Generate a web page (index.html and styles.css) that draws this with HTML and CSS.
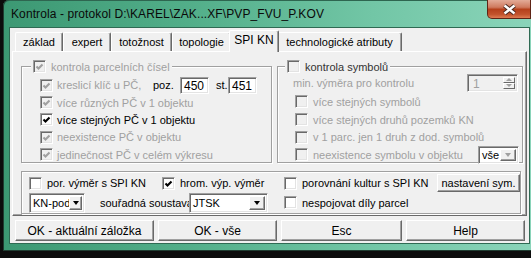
FILE: index.html
```html
<!DOCTYPE html>
<html lang="cs">

<head>
  <meta charset="UTF-8" />
  <meta name="viewport" content="width=device-width, initial-scale=1.0" />
  <link rel="stylesheet" href="styles.css">
  <title>Kontrola - protokol</title>
</head>

<body>
  <div class="window">
    <!-- titulek okna -->
    <div class="titlebar">
      <span class="title">Kontrola - protokol D:\KAREL\ZAK...XF\PVP_FVU_P.KOV</span>
      <div class="close">
        <svg width="15" height="11" viewBox="0 0 15 11">
          <path class="x-out" d="M2.5 1.5 L12.5 9.5 M12.5 1.5 L2.5 9.5" />
          <path class="x-in" d="M2.5 1.5 L12.5 9.5 M12.5 1.5 L2.5 9.5" />
        </svg>
      </div>
    </div>

    <div class="client">
      <!-- záložky -->
      <div class="tabs">
        <div class="tab tab-zaklad">základ</div>
        <div class="tab tab-expert">expert</div>
        <div class="tab tab-totoznost">totožnost</div>
        <div class="tab tab-topologie">topologie</div>
        <div class="tab tab-spi active">SPI KN</div>
        <div class="tab tab-tech">technologické atributy</div>
      </div>

      <div class="panel">
        <div class="groups">
          <!-- parcelní čísla -->
          <fieldset class="group group-pc">
            <legend>
              <span class="check dis"><span class="cb dis"><svg class="tick" viewBox="0 0 11 11"><polyline points="2.5,5.5 4.5,7.5 8.5,3.5" /></svg></span>kontrola parcelních čísel</span>
            </legend>
            <div class="row row-tall">
              <span class="check dis"><span class="cb dis"><svg class="tick" viewBox="0 0 11 11"><polyline points="2.5,5.5 4.5,7.5 8.5,3.5" /></svg></span><span class="key">kreslicí klíč u PČ,</span></span>
              <span class="lbl-poz">poz.</span>
              <span class="edit sunken">450</span>
              <span class="lbl-st">st.</span>
              <span class="edit sunken">451</span>
            </div>
            <div class="row">
              <span class="check dis"><span class="cb dis"><svg class="tick" viewBox="0 0 11 11"><polyline points="2.5,5.5 4.5,7.5 8.5,3.5" /></svg></span>více různých PČ v 1 objektu</span>
            </div>
            <div class="row">
              <span class="check"><span class="cb"><svg class="tick" viewBox="0 0 11 11"><polyline points="2.5,5.5 4.5,7.5 8.5,3.5" /></svg></span>více stejných PČ v 1 objektu</span>
            </div>
            <div class="row row-tall">
              <span class="check dis"><span class="cb dis"><svg class="tick" viewBox="0 0 11 11"><polyline points="2.5,5.5 4.5,7.5 8.5,3.5" /></svg></span>neexistence PČ v objektu</span>
            </div>
            <div class="row">
              <span class="check dis"><span class="cb dis"><svg class="tick" viewBox="0 0 11 11"><polyline points="2.5,5.5 4.5,7.5 8.5,3.5" /></svg></span>jedinečnost PČ v celém výkresu</span>
            </div>
          </fieldset>

          <!-- symboly -->
          <fieldset class="group group-sym">
            <legend>
              <span class="check legend-sym"><span class="cb dis"></span>kontrola symbolů</span>
            </legend>
            <div class="row row-big dis">
              <span class="min-label">min. výměra pro kontrolu</span>
              <span class="spin sunken">
                <span class="spin-val">1</span>
                <span class="spin-btns">
                  <span class="spin-btn up"></span>
                  <span class="spin-btn down"></span>
                </span>
              </span>
            </div>
            <div class="row row-big">
              <span class="check dis"><span class="cb dis"></span>více stejných symbolů</span>
            </div>
            <div class="row">
              <span class="check dis"><span class="cb dis"></span>více stejných druhů pozemků KN</span>
            </div>
            <div class="row row-tall">
              <span class="check dis"><span class="cb dis"></span>v 1 parc. jen 1 druh z dod. symbolů</span>
            </div>
            <div class="row">
              <span class="check dis"><span class="cb dis"></span>neexistence symbolu v objektu</span>
              <span class="combo combo-vse sunken"><span class="combo-val">vše</span><span class="drop dis"></span></span>
            </div>
          </fieldset>
        </div>

        <!-- spodní volby -->
        <div class="lower">
          <div class="lower-row row-1">
            <span class="check opt-por"><span class="cb"></span>por. výměr s SPI KN</span>
            <span class="check opt-hrom"><span class="cb"><svg class="tick" viewBox="0 0 11 11"><polyline points="2.5,5.5 4.5,7.5 8.5,3.5" /></svg></span>hrom. výp. výměr</span>
            <span class="check opt-kult"><span class="cb"></span>porovnání kultur s SPI KN</span>
            <button class="btn btn-sym">nastavení sym.</button>
          </div>
          <div class="lower-row row-2">
            <span class="combo combo-kn sunken"><span class="combo-val">KN-pod</span><span class="drop"></span></span>
            <span class="lbl-sour">souřadná soustava</span>
            <span class="combo combo-jtsk sunken"><span class="combo-val">JTSK</span><span class="drop"></span></span>
            <span class="check opt-nesp"><span class="cb"></span>nespojovat díly parcel</span>
          </div>
        </div>
      </div>

      <!-- tlačítka -->
      <div class="buttons">
        <button class="btn btn-ok1">OK - aktuální záložka</button>
        <button class="btn btn-ok2">OK - vše</button>
        <button class="btn btn-esc">Esc</button>
        <button class="btn btn-help">Help</button>
      </div>
    </div>
  </div>
</body>

</html>
```

FILE: styles.css
```css
:root {
  --face: #f0f0f0;
  --shadow: #a0a0a0;
  --dark: #696969;
  --light: #e3e3e3;
  --disabled: #a0a0a0;
}

* {
  box-sizing: border-box;
}

body {
  margin: 0;
  width: 531px;
  height: 258px;
  overflow: hidden;
  background-color: #0c0c0c;
  font-family: "Liberation Sans", Arial, sans-serif;
  font-size: 11px;
  color: #000;
}

/* okno */
.window {
  margin-left: 3px;
  width: 528px;
  height: 251px;
  padding: 0 2px 8px 7px;
  border-radius: 6px 0 0 0;
  background: linear-gradient(90deg, #3c9873 0%, #52ae89 35%, #72c6a6 70%, #8ad4b9 100%);
  box-shadow: inset 1px 0 0 #1f3d31, inset 0 1px 0 #2e6650, inset 0 -1px 0 #1f3d31;
  display: flex;
  flex-direction: column;
}

.titlebar {
  height: 28px;
  display: flex;
  align-items: flex-start;
  justify-content: space-between;
}

.title {
  padding: 7px 0 0 1px;
  font-size: 12px;
  letter-spacing: 0.1px;
  color: #0a0a0a;
  white-space: nowrap;
}

.close {
  width: 44px;
  height: 19px;
  margin-right: -2px;
  border: 1px solid #5e2416;
  border-top: none;
  border-radius: 0 0 0 5px;
  background: linear-gradient(#e3ab98 0%, #cf7a5f 40%, #b5401c 52%, #c2532c 80%, #de7c52 100%);
  display: flex;
  align-items: center;
  justify-content: center;
}

.x-out {
  stroke: #4a2a22;
  stroke-width: 4.4;
  fill: none;
}

.x-in {
  stroke: #fff;
  stroke-width: 2.4;
  fill: none;
}

.client {
  flex: 1;
  background-color: var(--face);
  box-shadow: 0 0 0 1px #2f6a53;
  padding: 0 2px;
  display: flex;
  flex-direction: column;
}

/* záložky */
.tabs {
  height: 23px;
  padding-left: 3px;
  display: flex;
  align-items: flex-end;
}

.tab {
  height: 19px;
  padding: 1px 0 0;
  line-height: 17px;
  text-align: center;
  border-top: 1px solid #fff;
  border-left: 1px solid #fff;
  border-right: 1px solid var(--dark);
  border-radius: 2px 2px 0 0;
  box-shadow: inset -1px 0 0 var(--shadow);
  white-space: nowrap;
}

.tab-zaklad { width: 48px; }
.tab-expert { width: 48px; }
.tab-totoznost { width: 61px; }
.tab-topologie { width: 59px; }
.tab-spi { width: 46px; }
.tab-tech { width: 125px; }

.tab.active {
  width: 50px;
  height: 22px;
  margin: 0 -2px -1px;
  padding-top: 1px;
  background-color: var(--face);
  position: relative;
  z-index: 1;
  font-size: 12px;
}

.panel {
  height: 165px;
  padding: 8px 2px 1px 8px;
  border: 1px solid;
  border-color: #fff var(--dark) var(--dark) #fff;
  box-shadow: inset -1px -1px 0 var(--shadow);
}

.groups {
  display: flex;
  gap: 5px;
  height: 103px;
}

/* rámečky skupin */
.group {
  margin: 0;
  padding: 3px 0 0;
  min-width: 0;
  border: 1px solid var(--shadow);
  box-shadow: inset 1px 1px 0 #fff, 1px 1px 0 #fff;
}

.group-pc {
  width: 251px;
}

.group-sym {
  width: 246px;
  padding-top: 0;
}

.group legend {
  padding: 0 2px;
  background-color: var(--face);
  height: 13px;
}

.group-pc legend {
  margin-left: 9px;
}

.group-sym legend {
  margin-left: 7px;
}

.group legend .check {
  gap: 5px;
  height: 13px;
}

.legend-sym {
  color: #333;
}

.row {
  height: 17px;
  display: flex;
  align-items: center;
}

.row-tall {
  height: 18px;
}

.row-big {
  height: 19px;
}

.group-pc .row {
  padding-left: 18px;
}

.group-sym .row {
  padding-left: 17px;
}

.group-sym .row.dis {
  padding-left: 15px;
  color: var(--disabled);
}

/* zaškrtávátka */
.check {
  display: inline-flex;
  align-items: center;
  gap: 5px;
  white-space: nowrap;
}

.group-pc .row .check {
  gap: 4px;
}

.check.dis {
  color: var(--disabled);
}

.cb {
  width: 13px;
  height: 13px;
  flex: none;
  border: 1px solid;
  border-color: var(--shadow) #fff #fff var(--shadow);
  box-shadow: inset 1px 1px 0 var(--dark), inset -1px -1px 0 var(--light);
  background-color: #fff;
  color: #000;
  display: inline-flex;
}

.cb.dis {
  background-color: var(--face);
  color: var(--disabled);
}

.tick {
  width: 11px;
  height: 11px;
}

.tick polyline {
  fill: none;
  stroke: currentColor;
  stroke-width: 2.1;
}

.key {
  width: 96px;
}

.lbl-poz {
  width: 27px;
}

.lbl-st {
  width: 19px;
  padding-left: 7px;
}

.sunken {
  border: 1px solid;
  border-color: var(--shadow) #fff #fff var(--shadow);
  box-shadow: inset 1px 1px 0 var(--dark), inset -1px -1px 0 var(--light);
}

.edit {
  width: 29px;
  height: 17px;
  padding: 1px 0 0 3px;
  line-height: 14px;
  background-color: #fff;
  font-size: 12px;
}

.min-label {
  flex: 1;
}

.spin {
  width: 51px;
  height: 18px;
  margin-right: 4px;
  padding: 2px;
  display: flex;
  background-color: var(--face);
}

.spin-val {
  flex: 1;
  padding-left: 3px;
  line-height: 14px;
  font-size: 12px;
}

.spin-btns {
  width: 12px;
  display: flex;
  flex-direction: column;
}

.spin-btn {
  flex: 1;
  border: 1px solid;
  border-color: #fff var(--dark) var(--dark) #fff;
  display: flex;
  align-items: center;
  justify-content: center;
}

.spin-btn::after {
  content: "";
  border-left: 3px solid transparent;
  border-right: 3px solid transparent;
}

.spin-btn.up::after {
  border-bottom: 3px solid var(--disabled);
}

.spin-btn.down::after {
  border-top: 3px solid var(--disabled);
}

/* rozbalovací seznamy */
.combo {
  height: 20px;
  padding: 2px;
  display: flex;
  background-color: #fff;
  flex: none;
}

.combo-val {
  flex: 1;
  min-width: 0;
  padding-left: 1px;
  line-height: 15px;
  font-size: 11px;
  white-space: nowrap;
}

.drop {
  width: 16px;
  flex: none;
  border: 1px solid;
  border-color: #fff var(--dark) var(--dark) #fff;
  box-shadow: inset -1px -1px 0 var(--shadow);
  background-color: var(--face);
  display: flex;
  align-items: center;
  justify-content: center;
}

.drop::after {
  content: "";
  border-left: 3.5px solid transparent;
  border-right: 3.5px solid transparent;
  border-top: 4px solid #000;
}

.drop.dis::after {
  border-top-color: var(--disabled);
}

.combo-vse {
  width: 41px;
  height: 18px;
  margin-left: auto;
  margin-right: 3px;
}

.combo-vse .combo-val {
  line-height: 13px;
}

.combo-kn {
  width: 56px;
}

.combo-kn .drop {
  width: 13px;
}

.combo-jtsk {
  width: 79px;
}

/* spodní část */
.lower {
  width: 500px;
  height: 43px;
  margin-top: 8px;
  padding: 2px 0 0 7px;
  border: 1px solid var(--shadow);
  box-shadow: inset 1px 1px 0 #fff, 1px 1px 0 #fff;
}

.lower-row {
  display: flex;
  align-items: center;
}

.row-1 {
  height: 18px;
}

.row-2 {
  height: 21px;
}

.opt-por { width: 133px; }
.opt-hrom { width: 122px; }
.opt-kult { width: 153px; }

/* popisek zasahuje pod seznam JTSK */
.lbl-sour {
  width: 89px;
  margin-left: 15px;
  white-space: nowrap;
}

.opt-nesp {
  margin-left: 16px;
}

/* tlačítka */
.btn {
  height: 21px;
  padding: 0;
  border: 1px solid;
  border-color: #fff var(--dark) var(--dark) #fff;
  box-shadow: inset -1px -1px 0 var(--shadow);
  background-color: var(--face);
  font-family: "Liberation Sans", Arial, sans-serif;
  font-size: 12px;
  color: #000;
}

.btn-sym {
  width: 83px;
  height: 18px;
  font-size: 11px;
}

.buttons {
  margin-top: 4px;
  padding-left: 3px;
  display: flex;
  gap: 4px;
}

.btn-ok1 { width: 139px; }
.btn-ok2 { width: 119px; }
.btn-esc { width: 121px; }
.btn-help { width: 119px; }
```
